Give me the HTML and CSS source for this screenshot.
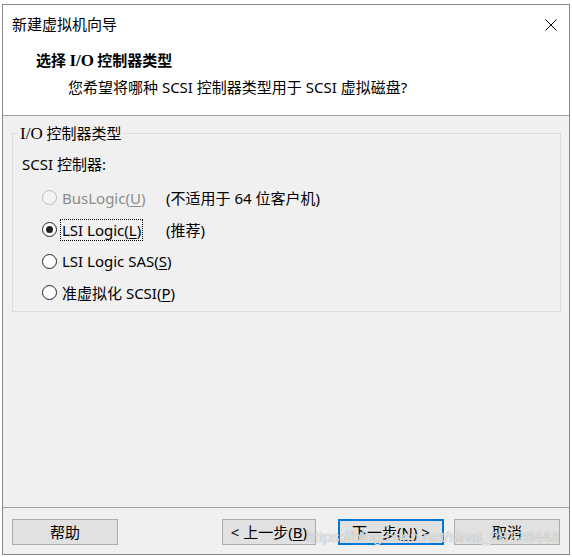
FILE: index.html
```html
<!DOCTYPE html>
<html lang="zh-CN">
<head>
<meta charset="utf-8">
<title>新建虚拟机向导</title>
<link rel="stylesheet" href="styles.css">
</head>
<body>
<div class="window">
  <div class="header">
    <div class="titlebar">
      <span class="title">新建虚拟机向导</span>
      <svg class="close" width="12" height="12" viewBox="0 0 12 12"><path d="M0.5 0.5 L11.5 11.5 M11.5 0.5 L0.5 11.5" stroke="#000" stroke-width="1" fill="none"/></svg>
    </div>
    <div class="head-title"><span class="cjk">选择 </span><span class="serif">I/O</span><span class="cjk"> 控制器类型</span></div>
    <div class="head-sub">您希望将哪种 SCSI 控制器类型用于 SCSI 虚拟磁盘?</div>
  </div>
  <div class="content">
    <div class="group">
      <div class="legend"><span class="serif-n">I/O</span> 控制器类型</div>
      <div class="group-label">SCSI 控制器:</div>
      <div class="options">
        <div class="row disabled">
          <span class="radio"></span>
          <span class="opt">BusLogic(<u>U</u>)</span>
          <span class="note">(不适用于 64 位客户机)</span>
        </div>
        <div class="row">
          <span class="radio checked"></span>
          <span class="opt"><span class="focus">LSI Logic(<u>L</u>)</span></span>
          <span class="note">(推荐)</span>
        </div>
        <div class="row">
          <span class="radio"></span>
          <span class="opt">LSI Logic SAS(<u>S</u>)</span>
        </div>
        <div class="row">
          <span class="radio"></span>
          <span class="opt">准虚拟化 SCSI(<u>P</u>)</span>
        </div>
      </div>
    </div>
  </div>
  <div class="footer">
    <button class="btn help">帮助</button>
    <button class="btn prev">&lt; 上一步(<u>B</u>)</button>
    <button class="btn next">下一步(<u>N</u>) &gt;</button>
    <button class="btn cancel">取消</button>
  </div>
  <div class="watermark">https://blog.csdn.net/sinat_28228443</div>
</div>
</body>
</html>
```
FILE: styles.css
```css
* { box-sizing: border-box; }
html, body { margin: 0; padding: 0; }
body {
  width: 572px;
  height: 557px;
  background: #ffffff;
  font-family: "Noto Sans", "Noto Sans CJK SC", sans-serif;
  font-size: 15px;
  color: #000;
  overflow: hidden;
}
.window {
  position: relative;
  margin: 4px 0 0 2px;
  width: 568px;
  height: 551px;
  border: 1px solid #8a8a8a;
  background: #f0f0f0;
  display: flex;
  flex-direction: column;
}
.header {
  height: 111px;
  background: #ffffff;
  border-bottom: 1px solid #a0a0a0;
}
.titlebar {
  height: 38px;
  display: flex;
  align-items: center;
  justify-content: space-between;
  padding: 0 12px 0 9px;
}
.title { line-height: 20px; }
.close { display: block; margin-top: 1px; }
.head-title {
  margin-top: 7px;
  padding-left: 33px;
  line-height: 20px;
  font-weight: bold;
  font-size: 15px;
}
.head-title .cjk { font-family: "Noto Sans CJK SC", sans-serif; }
.serif { font-family: "Liberation Serif", "Noto Sans CJK SC", serif; font-size: 17px; }
.serif-n { font-family: "Liberation Serif", serif; font-size: 17px; }
.head-sub {
  margin-top: 6px;
  padding-left: 65px;
  line-height: 20px;
}
.content {
  flex: 1;
  padding: 17px 8px 0 9px;
}
.group {
  height: 179px;
  border: 1px solid #dcdcdc;
  line-height: 20px;
}
.legend {
  display: block;
  width: max-content;
  margin: -11px 0 0 5px;
  padding: 0 2px;
  height: 20px;
  line-height: 20px;
  background: #f0f0f0;
}
.group-label {
  margin: 11px 0 0 9px;
  line-height: 20px;
}
.options { margin-top: 8px; }
.row {
  height: 31.7px;
  display: flex;
  align-items: center;
  padding-left: 29px;
  line-height: 20px;
  white-space: nowrap;
}
.radio {
  flex: none;
  width: 15px;
  height: 15px;
  border-radius: 50%;
  border: 1px solid #222;
  background: #fff;
  position: relative;
  margin-right: 5px;
}
.radio.checked::after {
  content: "";
  position: absolute;
  left: 3px; top: 3px;
  width: 7px; height: 7px;
  border-radius: 50%;
  background: #222;
}
.opt { min-width: 104px; }
.disabled .radio { border-color: #bcbcbc; background: #f4f4f4; }
.disabled .opt { color: #8d8d8d; }
.focus { outline: 1px dotted #000; outline-offset: 0; padding: 0 1px; margin-left: -1px; }
u { text-decoration: underline; text-underline-offset: 2px; }
.footer {
  height: 47px;
  border-top: 1px solid #a0a0a0;
  display: flex;
  align-items: flex-start;
  padding: 11px 0 0 9px;
}
.btn {
  height: 26px;
  font: inherit;
  font-size: 15px;
  line-height: 20px;
  padding: 0;
  color: #000;
  background: #e1e1e1;
  border: 1px solid #adadad;
  white-space: nowrap;
}
.help { width: 106px; }
.prev { width: 94px; margin-left: 104px; }
.next { width: 106px; margin-left: 22px; border: 2px solid #0078d7; }
.cancel { width: 106px; margin-left: 10px; }
.watermark {
  position: absolute;
  left: 303px;
  top: 522px;
  font-family: "Liberation Sans", sans-serif;
  font-size: 15.5px;
  line-height: 20px;
  color: rgba(255,255,255,0.75);
  text-shadow: 0 0 1px rgba(110,110,110,0.8);
  pointer-events: none;
}
```
